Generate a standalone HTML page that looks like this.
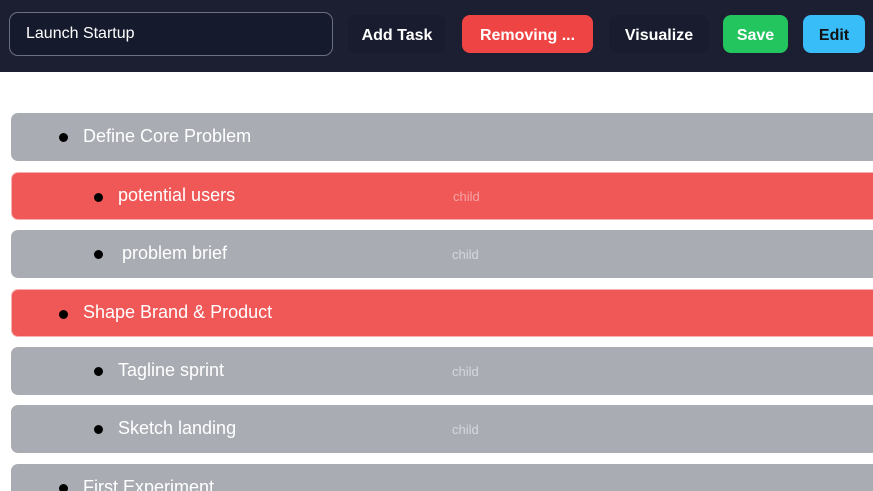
<!DOCTYPE html>
<html><head><style>
*{margin:0;padding:0;box-sizing:border-box}
html,body{width:873px;height:491px;overflow:hidden}
body{background:#fff;font-family:"Liberation Sans",sans-serif;position:relative}
.hdr{position:absolute;left:0;top:0;width:873px;height:72px;background:#1c1f32}
.inp{position:absolute;left:9px;top:12px;width:324px;height:44px;border:1px solid #6b6f80;border-radius:9px;background:#151a2d;color:#fff;font-size:16px;line-height:42px;padding-left:16px}
.btn{position:absolute;top:15px;height:38px;border-radius:8px;color:#fff;font-weight:bold;font-size:16px;line-height:41px;text-align:center}
.row{position:absolute;left:11px;width:880px;height:48px;border-radius:7px;background:#a9acb3;color:#fff;font-size:18px}
.red{background:#f05757;border:1px solid #f6b0b0}
.row .b{position:absolute;top:20px;width:9px;height:9px;border-radius:50%;background:#000}
.row .t{position:absolute;top:13px}
.row .c{position:absolute;left:441px;top:17px;font-size:13px;color:#d6d8dd}
.red .c{color:#f7a5a5}
</style></head><body>
<div class="hdr">
<div class="inp">Launch Startup</div>
<div class="btn" style="left:348px;width:98px;background:#181c2e">Add Task</div>
<div class="btn" style="left:462px;width:131px;background:#ef4444">Removing ...</div>
<div class="btn" style="left:609px;width:100px;background:#181c2e">Visualize</div>
<div class="btn" style="left:723px;width:65px;background:#22c55e">Save</div>
<div class="btn" style="left:803px;width:62px;background:#38bdf8;color:#111">Edit</div>
</div>
<div class="row" style="top:113px"><span class="b" style="left:48px"></span><span class="t" style="left:72px">Define Core Problem</span></div>
<div class="row red" style="top:172px"><span class="b" style="left:82px"></span><span class="t" style="left:106px;top:12px">potential users</span><span class="c" style="top:16px">child</span></div>
<div class="row" style="top:230px"><span class="b" style="left:83px"></span><span class="t" style="left:111px">problem brief</span><span class="c">child</span></div>
<div class="row red" style="top:289px"><span class="b" style="left:47px"></span><span class="t" style="left:71px;top:12px">Shape Brand &amp; Product</span></div>
<div class="row" style="top:347px"><span class="b" style="left:83px"></span><span class="t" style="left:107px">Tagline sprint</span><span class="c">child</span></div>
<div class="row" style="top:405px"><span class="b" style="left:83px"></span><span class="t" style="left:107px">Sketch landing</span><span class="c">child</span></div>
<div class="row" style="top:464px"><span class="b" style="left:48px"></span><span class="t" style="left:72px">First Experiment</span></div>
</body></html>
